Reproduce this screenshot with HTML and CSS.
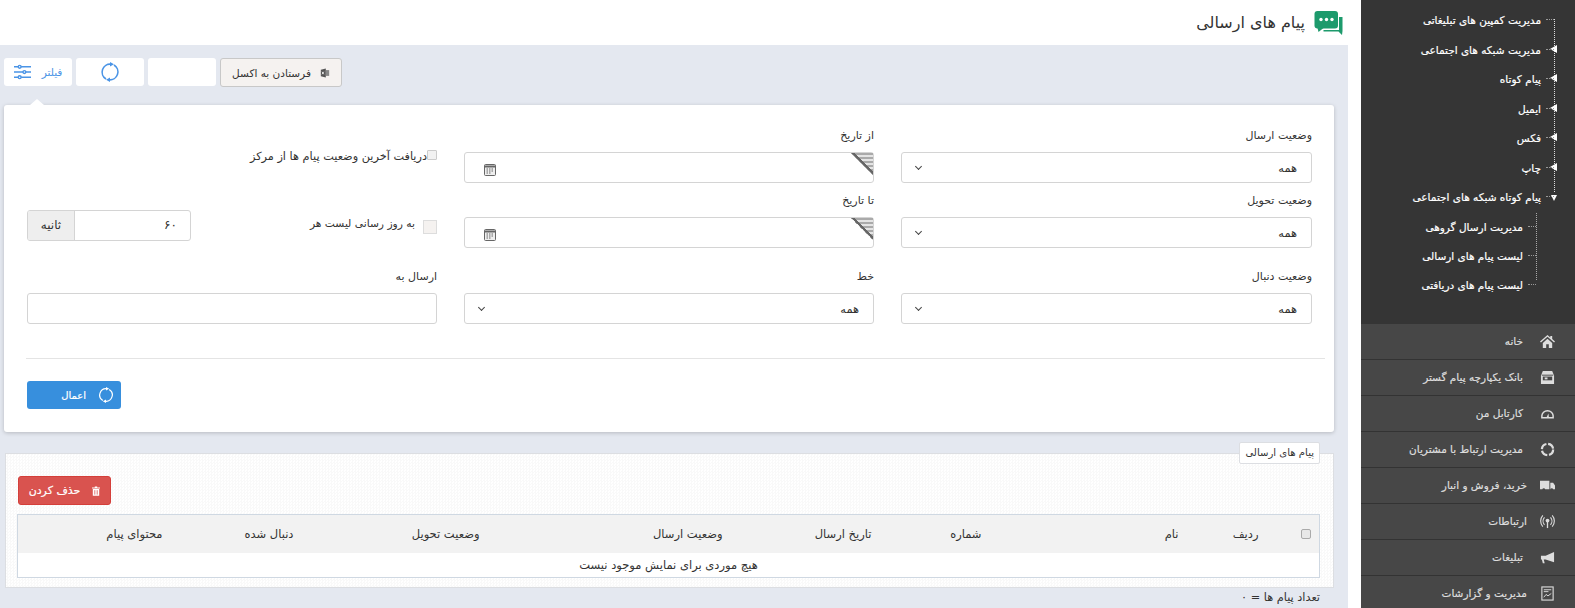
FILE: index.html
```html
<!DOCTYPE html>
<html lang="fa" dir="rtl">
<head>
    <meta charset="UTF-8">
    <title>پیام های ارسالی</title>
    <link rel="stylesheet" href="styles.css">
</head>
<body>
<div class="layout">

    <aside class="sidebar">
        <ul class="tree">
            <li><span>مدیریت کمپین های تبلیغاتی</span></li>
            <li class="has-arrow"><span>مدیریت شبکه های اجتماعی</span></li>
            <li class="has-arrow"><span>پیام کوتاه</span></li>
            <li class="has-arrow"><span>ایمیل</span></li>
            <li class="has-arrow"><span>فکس</span></li>
            <li class="has-arrow"><span>چاپ</span></li>
            <li class="has-arrow open"><span>پیام کوتاه شبکه های اجتماعی</span></li>
        </ul>
        <ul class="subtree">
            <li><span>مدیریت ارسال گروهی</span></li>
            <li><span>لیست پیام های ارسالی</span></li>
            <li><span>لیست پیام های دریافتی</span></li>
        </ul>
        <nav class="menu">
            <a class="menu-item">
                <svg viewBox="0 0 16 16"><path d="M8 1 0 8l1 1 7-6 7 6 1-1-3-2.700V2h-2v1.600zM3 9.500V15h3.600v-4h2.800v4H13V9.500L8 5z" fill="#ddd"/></svg>
                <span>خانه</span>
            </a>
            <a class="menu-item">
                <svg viewBox="0 0 16 16"><path d="M3 1h10l2 5v9H1V6z" fill="#ddd"/><path d="M2 5h12v1H2z" fill="#474747"/><rect x="3" y="7" width="10" height="4" fill="#474747"/><rect x="5" y="8" width="3" height="2" fill="#ddd"/></svg>
                <span>بانک یکپارچه پیام گستر</span>
            </a>
            <a class="menu-item">
                <svg viewBox="0 0 16 16"><path d="M2 12.500V10.500a6 5.500 0 0 1 12 0v2z" fill="none" stroke="#ddd" stroke-width="1.600"/><path d="M7 12l2-4 .500 4z" fill="#ddd"/></svg>
                <span>کارتابل من</span>
            </a>
            <a class="menu-item">
                <svg viewBox="0 0 16 16"><circle cx="8" cy="8" r="6" fill="none" stroke="#ddd" stroke-width="2.400" stroke-dasharray="7.500 1.920"/></svg>
                <span>مدیریت ارتباط با مشتریان</span>
            </a>
            <a class="menu-item item-wide">
                <svg viewBox="0 0 16 16"><path d="M0 3h10v9H0zM11 5h3l2 3v4h-5z" fill="#ddd"/><circle cx="4" cy="12.500" r="1.500" fill="#474747"/><circle cx="12.500" cy="12.500" r="1.500" fill="#474747"/></svg>
                <span>خرید، فروش و انبار</span>
            </a>
            <a class="menu-item item-wide">
                <svg viewBox="0 0 16 16"><g fill="none" stroke="#ddd" stroke-width="1.200"><path d="M4.800 3.500a6 6 0 0 0 0 8M11.200 3.500a6 6 0 0 1 0 8M3 1.500a9 9 0 0 0 0 12M13 1.500a9 9 0 0 1 0 12"/></g><circle cx="8" cy="7" r="2" fill="#ddd"/><path d="M7.300 8h1.400v7H7.300z" fill="#ddd"/></svg>
                <span>ارتباطات</span>
            </a>
            <a class="menu-item">
                <svg viewBox="0 0 16 16"><path d="M15 2v11L6 10H4l1 4H3L2 10H1V6h5z" fill="#ddd"/></svg>
                <span>تبلیغات</span>
            </a>
            <a class="menu-item item-wide">
                <svg viewBox="0 0 16 16"><rect x="2" y="1" width="12" height="14" fill="none" stroke="#ddd" stroke-width="1.200"/><path d="M4 4h8M4 6h5M4 12l2.500-3 2 1.500L12 8" fill="none" stroke="#ddd"/></svg>
                <span>مدیریت و گزارشات</span>
            </a>
        </nav>
    </aside>

    <main class="main">
        <header class="page-title">
            <svg class="title-icon" viewBox="0 0 28 24">
                <path d="M24.500 6h3.500v14l-.5 4-3.500-3.500H9V19h15.500z" fill="#1d9a6c"/>
                <rect x="0" y="0" width="23.500" height="17.500" rx="3" fill="#1d9a6c"/>
                <path d="M3 17h6l-5 4z" fill="#1d9a6c"/>
                <circle cx="6.500" cy="8.500" r="1.700" fill="#fff"/><circle cx="12" cy="8.500" r="1.700" fill="#fff"/><circle cx="17.500" cy="8.500" r="1.700" fill="#fff"/>
            </svg>
            <h1>پیام های ارسالی</h1>
        </header>

        <div class="content">
            <div class="toolbar">
                <button class="btn-excel">
                    <svg viewBox="0 0 12 12"><path d="M1 2l6-1.500v11L1 10z" fill="#555"/><path d="M7 2.500h4v7H7z" fill="#888"/><path d="M2.500 4.500l2 3M4.500 4.500l-2 3" stroke="#fff"/></svg>
                    فرستادن به اکسل
                </button>
                <div class="tool"></div>
                <div class="tool">
                    <svg class="spin" viewBox="0 0 20 20"><path d="M11 2.200A8 8 0 0 0 6 17M9 17.800A8 8 0 0 0 14 3" fill="none" stroke="#4a94e6" stroke-width="1.600"/><path d="M10 0l4 2.200-4 2.300zM10 15.500l-4 2.300 4 2.200z" fill="#4a94e6"/></svg>
                </div>
                <div class="tool tool-filter">
                    <span>فیلتر</span>
                    <svg class="sliders" viewBox="0 0 18 16"><g stroke="#4a94e6" stroke-width="1.500" fill="#fff"><path d="M0 2.500h18M0 8h18M0 13.500h18"/><circle cx="6" cy="2.500" r="1.500"/><circle cx="11" cy="8" r="1.500"/><circle cx="6" cy="13.500" r="1.500"/></g></svg>
                </div>
            </div>

            <section class="filter-card">
                <div class="filter-grid">
                    <div class="field">
                        <label>وضعیت ارسال</label>
                        <div class="select"><span>همه</span><i class="chevron"></i></div>
                    </div>
                    <div class="field">
                        <label>از تاریخ</label>
                        <div class="date"><i class="corner"></i><svg class="cal" viewBox="0 0 12 13"><rect x=".5" y="1.500" width="11" height="11" rx="1" fill="#eee" stroke="#666"/><path d="M.5 3.500h11" stroke="#666" stroke-width="2"/><path d="M2.500 6h7M2.500 8h7M2.500 10h5" stroke="#666" stroke-dasharray="1.500 1"/></svg></div>
                    </div>
                    <div class="field field-check">
                        <label class="check-line"><input type="checkbox" class="check-small">دریافت آخرین وضعیت پیام ها از مرکز</label>
                    </div>

                    <div class="field">
                        <label>وضعیت تحویل</label>
                        <div class="select"><span>همه</span><i class="chevron"></i></div>
                    </div>
                    <div class="field">
                        <label>تا تاریخ</label>
                        <div class="date"><i class="corner"></i><svg class="cal" viewBox="0 0 12 13"><rect x=".5" y="1.500" width="11" height="11" rx="1" fill="#eee" stroke="#666"/><path d="M.5 3.500h11" stroke="#666" stroke-width="2"/><path d="M2.500 6h7M2.500 8h7M2.500 10h5" stroke="#666" stroke-dasharray="1.500 1"/></svg></div>
                    </div>
                    <div class="field field-refresh">
                        <label class="check-line refresh-line"><span class="check-box"></span>به روز رسانی لیست هر</label>
                        <div class="seconds"><span class="seconds-value">۶۰</span><span class="seconds-unit">ثانیه</span></div>
                    </div>

                    <div class="field">
                        <label>وضعیت دنبال</label>
                        <div class="select"><span>همه</span><i class="chevron"></i></div>
                    </div>
                    <div class="field">
                        <label>خط</label>
                        <div class="select"><span>همه</span><i class="chevron"></i></div>
                    </div>
                    <div class="field">
                        <label>ارسال به</label>
                        <div class="text-input"></div>
                    </div>
                </div>
                <hr class="divider">
                <div class="apply-row">
                    <button class="btn-apply">
                        <svg viewBox="0 0 20 20"><path d="M11 2.200A8 8 0 0 0 6 17M9 17.800A8 8 0 0 0 14 3" fill="none" stroke="#fff" stroke-width="1.500"/><path d="M10 0l4 2.200-4 2.300zM10 15.500l-4 2.300 4 2.200z" fill="#fff"/></svg>
                        اعمال
                    </button>
                </div>
            </section>

            <section class="panel">
                <div class="panel-legend">پیام های ارسالی</div>
                <button class="btn-delete">
                    <svg viewBox="0 0 10 12"><path d="M0 1.500h3.500V.5h3v1H10V3H0zM1 3.500h8V12H1z" fill="#fff"/><path d="M3.500 5v5.500M6.500 5v5.500" stroke="#d9534f"/></svg>
                    حذف کردن
                </button>
                <table class="grid">
                    <colgroup>
                        <col class="c-check"><col class="c-row"><col class="c-name"><col class="c-number"><col class="c-date"><col class="c-send"><col class="c-deliver"><col class="c-follow"><col class="c-body">
                    </colgroup>
                    <thead>
                        <tr>
                            <th><input type="checkbox" class="check-head"></th>
                            <th>ردیف</th>
                            <th>نام</th>
                            <th>شماره</th>
                            <th>تاریخ ارسال</th>
                            <th>وضعیت ارسال</th>
                            <th>وضعیت تحویل</th>
                            <th>دنبال شده</th>
                            <th>محتوای پیام</th>
                        </tr>
                    </thead>
                    <tbody>
                        <tr><td colspan="9">هیچ موردی برای نمایش موجود نیست</td></tr>
                    </tbody>
                </table>
            </section>
            <div class="count">تعداد پیام ها = ۰</div>
        </div>
    </main>

</div>
</body>
</html>
```

FILE: styles.css
```css
* {
    box-sizing: border-box;
}
html, body {
    height: 100%;
}
body {
    margin: 0;
    font-family: "DejaVu Sans", sans-serif;
    font-size: 11px;
    color: #333;
    background: #fff;
    overflow: hidden;
}
button {
    font-family: inherit;
}
.layout {
    display: flex;
    height: 608px;
}

/* sidebar */
.sidebar {
    width: 214px;
    margin-left: 13px;
    flex-shrink: 0;
    background: #353535;
    color: #fff;
    font-size: 10.500px;
    -webkit-text-stroke: .2px;
    display: flex;
    flex-direction: column;
    overflow: hidden;
}
.tree, .subtree {
    list-style: none;
    margin: 0;
    position: relative;
}
.tree {
    padding: 6px 34px 0 0;
}
.tree::before {
    content: "";
    position: absolute;
    right: 20px;
    top: 19px;
    height: 173px;
    border-right: 1px dotted #ddd;
}
.tree li, .subtree li {
    position: relative;
    white-space: nowrap;
}
.tree li {
    height: 29.500px;
    line-height: 29px;
}
.subtree li {
    height: 29px;
    line-height: 29px;
}
.tree li::after, .subtree li::after {
    content: "";
    position: absolute;
    right: -13px;
    top: 13px;
    width: 8px;
    border-top: 1px dotted #999;
}
.tree li.has-arrow::before {
    content: "";
    position: absolute;
    right: -16px;
    top: 9px;
    border-top: 4.500px solid transparent;
    border-bottom: 4.500px solid transparent;
    border-right: 7px solid #fff;
}
.tree li.open::before {
    top: 12px;
    border-top: 6px solid #fff;
    border-bottom: 0;
    border-right: 3.500px solid transparent;
    border-left: 3.500px solid transparent;
}
.subtree {
    padding: 0 52px 0 0;
}
.subtree::before {
    content: "";
    position: absolute;
    right: 38px;
    top: 0;
    height: 67px;
    border-right: 1px dotted #aaa;
}
.menu {
    margin-top: 24px;
    background: #474747;
    flex: 1;
}
.menu-item {
    height: 36px;
    display: flex;
    align-items: center;
    gap: 17px;
    padding-right: 20px;
    border-bottom: 1px solid #333;
    color: #ddd;
    font-size: 10.500px;
}
.menu-item svg {
    width: 15px;
    height: 15px;
    flex-shrink: 0;
}
.menu-item.item-wide {
    gap: 13px;
}

/* main area */
.main {
    flex: 1;
    display: flex;
    flex-direction: column;
    min-width: 0;
}
.page-title {
    height: 45px;
    flex-shrink: 0;
    display: flex;
    align-items: center;
    gap: 9px;
    padding-right: 5px;
}
.page-title h1 {
    margin: 0;
    font-size: 16px;
    font-weight: normal;
}
.title-icon {
    width: 29px;
    height: 24px;
}
.content {
    flex: 1;
    background: #e4e8f0;
    padding: 13px 14px 0 4px;
}
.toolbar {
    display: flex;
    justify-content: flex-end;
    gap: 4px;
    height: 28px;
}
.tool {
    width: 68px;
    height: 28px;
    background: #fff;
    border-radius: 3px;
    display: flex;
    align-items: center;
    justify-content: center;
}
.tool-filter {
    position: relative;
    gap: 11px;
    color: #4a94e6;
    font-size: 10.500px;
}
.tool-filter::after {
    content: "";
    position: absolute;
    bottom: -19px;
    left: 26px;
    border-left: 7px solid transparent;
    border-right: 7px solid transparent;
    border-bottom: 6px solid #fff;
}
.spin {
    width: 20px;
    height: 20px;
}
.sliders {
    width: 17px;
    height: 16px;
}
.btn-excel {
    width: 122px;
    height: 29px;
    background: #f5f2f0;
    border: 1px solid #c8c8c8;
    border-radius: 3px;
    font-size: 10.500px;
    color: #333;
    display: flex;
    align-items: center;
    justify-content: center;
    gap: 9px;
    padding: 0;
}
.btn-excel svg {
    width: 10px;
    height: 10px;
}

/* filter card */
.filter-card {
    margin-top: 19px;
    height: 327px;
    background: #fff;
    border-radius: 3px;
    box-shadow: 0 1px 4px rgba(0, 0, 0, .2);
    padding: 24px 22px 0 23px;
}
.filter-grid {
    display: grid;
    grid-template-columns: 411px 410px 410px;
    column-gap: 27px;
    grid-template-rows: 65px 76px auto;
}
.field label {
    display: block;
    font-size: 11px;
    line-height: 14px;
    margin-bottom: 9px;
    color: #333;
}
.field .check-line {
    display: flex;
    align-items: flex-start;
    margin: 0;
    font-size: 11.300px;
}
.select, .date, .text-input {
    height: 31px;
    border: 1px solid #d4d4d4;
    border-radius: 3px;
    background: #fff;
    position: relative;
}
.select {
    display: flex;
    align-items: center;
    justify-content: space-between;
    padding: 0 14px;
    font-size: 11.400px;
}
.chevron {
    width: 5px;
    height: 5px;
    border-right: 1.500px solid #444;
    border-bottom: 1.500px solid #444;
    transform: rotate(45deg);
    margin-top: -2px;
}
.corner {
    position: absolute;
    top: 0;
    right: 0;
    width: 22px;
    height: 22px;
    background:
        linear-gradient(to top right, transparent 50%, #666 50% 57%, transparent 57%),
        repeating-linear-gradient(0deg, #aaa 0 2px, #e4e4e4 2px 4px);
    clip-path: polygon(0 0, 100% 0, 100% 100%);
}
.cal {
    position: absolute;
    left: 19px;
    top: 10px;
    width: 12px;
    height: 13px;
}
.field-check {
    padding-top: 21px;
}
.check-small {
    appearance: none;
    width: 10px;
    height: 10px;
    margin: 0;
    flex-shrink: 0;
    background: #f2f2f2;
    border: 1px solid #ccc;
    border-radius: 1px;
}
.field-refresh {
    display: flex;
    justify-content: space-between;
    padding-top: 16px;
}
.field .refresh-line {
    margin-top: 7px;
    font-size: 10.700px;
}
.check-box {
    width: 14px;
    height: 14px;
    background: #f5f2f0;
    border: 1px solid #ddd;
    margin: 3px 0 0 8px;
}
.seconds {
    width: 164px;
    height: 31px;
    border: 1px solid #d4d4d4;
    border-radius: 3px;
    display: flex;
    overflow: hidden;
    font-size: 12px;
}
.seconds-value {
    flex: 1;
    line-height: 28px;
    padding-right: 13px;
}
.seconds-unit {
    width: 47px;
    background: #eee;
    border-right: 1px solid #d4d4d4;
    text-align: center;
    line-height: 28px;
}
.divider {
    border: 0;
    border-top: 1px solid #e4e4e4;
    margin: 34px -13px 22px -1px;
}
.apply-row {
    display: flex;
    justify-content: flex-end;
}
.btn-apply {
    width: 94px;
    height: 28px;
    border: 0;
    border-radius: 3px;
    background: #378fdd;
    color: #fff;
    font-size: 10px;
    -webkit-text-stroke: .2px #fff;
    display: flex;
    align-items: center;
    gap: 12px;
    padding: 0 7px 0 0;
    margin: 0;
}
.btn-apply svg {
    width: 16px;
    height: 16px;
}

/* results panel */
.panel {
    position: relative;
    margin: 21px 0 0 1px;
    height: 135px;
    border: 1px solid #dcdee2;
    background: repeating-conic-gradient(#f9f9f9 0 25%, #fff 0 50%) 0 0 / 3px 3px;
    padding: 22px 13px 0 12px;
}
.panel-legend {
    position: absolute;
    top: -12px;
    right: 13px;
    height: 22px;
    padding: 0 5px;
    background: #fff;
    border: 1px solid #dcdee2;
    border-radius: 2px;
    font-size: 10.100px;
    line-height: 20px;
}
.btn-delete {
    display: flex;
    align-items: center;
    justify-content: center;
    gap: 12px;
    width: 93px;
    height: 29px;
    margin-right: auto;
    background: #d9534f;
    border: 1px solid #d43f3a;
    border-radius: 3px;
    color: #fff;
    font-size: 11px;
    -webkit-text-stroke: .2px #fff;
    padding: 0;
}
.btn-delete svg {
    width: 8px;
    height: 10px;
}
.grid {
    width: 1302px;
    margin-top: 9px;
    border-collapse: collapse;
    table-layout: fixed;
    background: #fff;
    border: 1px solid #cfd8e2;
}
.c-check { width: 61px; }
.c-row { width: 80px; }
.c-name { width: 197px; }
.c-number { width: 110px; }
.c-date { width: 149px; }
.c-send { width: 243px; }
.c-deliver { width: 186px; }
.c-follow { width: 131px; }
.c-body { width: 145px; }
.grid th {
    height: 38px;
    background: #f2f2f2;
    font-size: 11.500px;
    font-weight: normal;
    text-align: right;
    padding: 0;
}
.grid td {
    height: 25px;
    font-size: 11.500px;
    text-align: center;
    padding: 0;
}
.check-head {
    appearance: none;
    display: block;
    width: 10px;
    height: 10px;
    margin: 0 8px 0 0;
    background: #e8e8e8;
    border: 1px solid #aaa;
    border-radius: 2px;
}
.count {
    margin-top: 3px;
    padding-right: 14px;
    font-size: 11.300px;
}
```
